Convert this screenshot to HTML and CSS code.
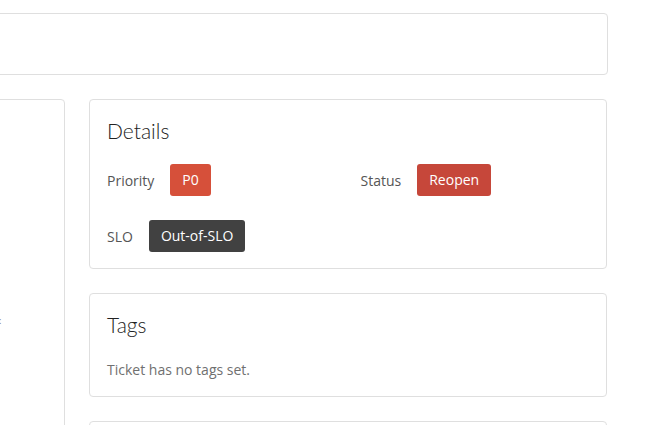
FILE: index.html
```html
<!DOCTYPE html>
<html>
<head>
<meta charset="utf-8">
<link rel="stylesheet" href="styles.css">
</head>
<body>
<div class="page">
  <div class="card top-card"></div>
  <div class="columns">
    <div class="card side-card">
      <span class="side-text">:</span>
    </div>
    <div class="main">
      <div class="card section">
        <h2 class="title">Details</h2>
        <div class="fields">
          <div class="field">
            <span class="label">Priority</span>
            <span class="badge badge-p0">P0</span>
          </div>
          <div class="field">
            <span class="label">Status</span>
            <span class="badge badge-reopen">Reopen</span>
          </div>
          <div class="field">
            <span class="label">SLO</span>
            <span class="badge badge-dark">Out-of-SLO</span>
          </div>
        </div>
      </div>
      <div class="card section">
        <h2 class="title">Tags</h2>
        <p class="muted">Ticket has no tags set.</p>
      </div>
      <div class="card section tail"></div>
    </div>
  </div>
</div>
</body>
</html>
```
FILE: styles.css
```css
* { box-sizing: border-box; }
html, body {
  margin: 0;
  padding: 0;
  background: #ffffff;
  overflow: hidden;
}
body {
  font-family: "Open Sans", "Noto Sans", sans-serif;
  color: #333;
  height: 425px;
}
.page {
  margin-left: -200px;
  width: 808px;
  padding-top: 13px;
}
.card {
  background: #fff;
  border: 1px solid #dfdfdf;
  border-radius: 4px;
}
.top-card {
  height: 62px;
}
.columns {
  display: grid;
  grid-template-columns: 265px 518px;
  column-gap: 24px;
  margin-top: 24px;
}
.side-card {
  height: 400px;
  position: relative;
}
.side-text {
  position: absolute;
  left: 198px;
  top: 214px;
  font-size: 9px;
  color: #777;
}
.main {
  display: flex;
  flex-direction: column;
  gap: 24px;
}
.section {
  padding: 17px 17px 16px 17px;
}
.title {
  margin: 2px 0 0 0;
  font-family: "Lato", "Open Sans", sans-serif;
  font-size: 21px;
  font-weight: 300;
  line-height: 24px;
  color: #222;
}
.fields {
  display: grid;
  grid-template-columns: 1fr 1fr;
  column-gap: 25px;
  row-gap: 24px;
  margin-top: 21px;
}
.field {
  display: flex;
  align-items: center;
  gap: 16px;
}
.label {
  font-size: 14px;
  font-weight: 500;
  color: #555;
}
.badge {
  display: inline-block;
  padding: 6px 12px;
  font-size: 14px;
  line-height: 20px;
  color: #fff;
  border-radius: 3px;
}
.badge-p0 { background: #d6503a; }
.badge-reopen { background: #c6473a; }
.badge-dark { background: #414141; }
.muted {
  margin: 23px 0 0 0;
  font-size: 14px;
  line-height: 20px;
  color: #707070;
}
.tail {
  height: 40px;
}
```
